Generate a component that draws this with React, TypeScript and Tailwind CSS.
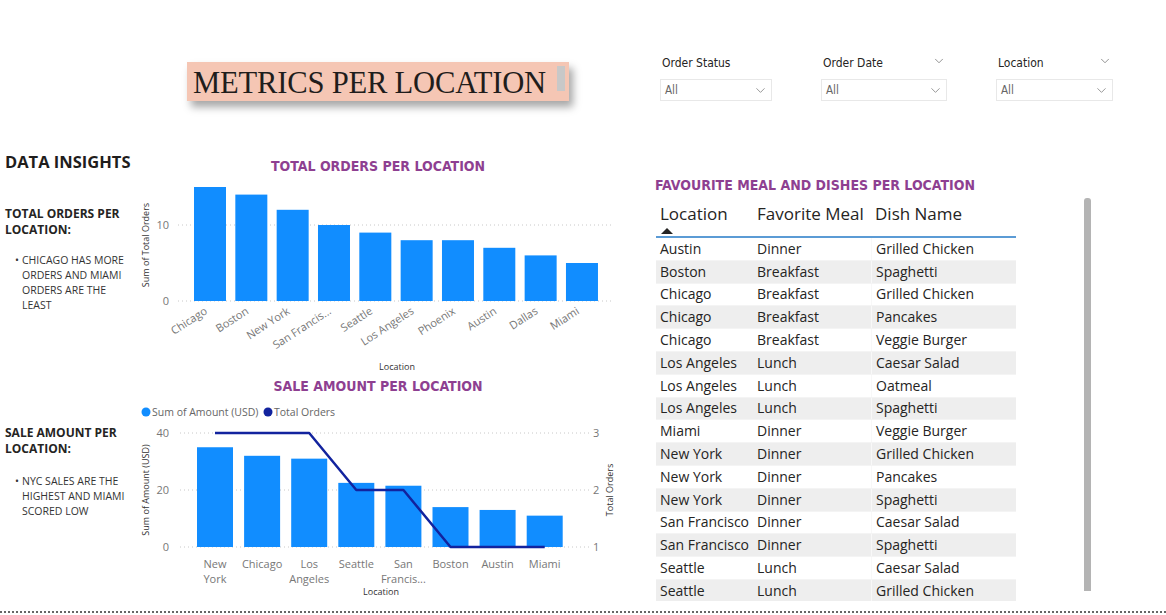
import { ChevronDown } from 'lucide-react';

const ordersData = [
  { name: 'Chicago', value: 15 },
  { name: 'Boston', value: 14 },
  { name: 'New York', value: 12 },
  { name: 'San Francis...', value: 10 },
  { name: 'Seattle', value: 9 },
  { name: 'Los Angeles', value: 8 },
  { name: 'Phoenix', value: 8 },
  { name: 'Austin', value: 7 },
  { name: 'Dallas', value: 6 },
  { name: 'Miami', value: 5 },
];

const salesData = [
  { name: ['New', 'York'], amount: 35, orders: 3 },
  { name: ['Chicago'], amount: 32, orders: 3 },
  { name: ['Los', 'Angeles'], amount: 31, orders: 3 },
  { name: ['Seattle'], amount: 22.5, orders: 2 },
  { name: ['San', 'Francis...'], amount: 21.5, orders: 2 },
  { name: ['Boston'], amount: 14, orders: 1 },
  { name: ['Austin'], amount: 13, orders: 1 },
  { name: ['Miami'], amount: 11, orders: 1 },
];

const rows = [
  ['Austin', 'Dinner', 'Grilled Chicken'],
  ['Boston', 'Breakfast', 'Spaghetti'],
  ['Chicago', 'Breakfast', 'Grilled Chicken'],
  ['Chicago', 'Breakfast', 'Pancakes'],
  ['Chicago', 'Breakfast', 'Veggie Burger'],
  ['Los Angeles', 'Lunch', 'Caesar Salad'],
  ['Los Angeles', 'Lunch', 'Oatmeal'],
  ['Los Angeles', 'Lunch', 'Spaghetti'],
  ['Miami', 'Dinner', 'Veggie Burger'],
  ['New York', 'Dinner', 'Grilled Chicken'],
  ['New York', 'Dinner', 'Pancakes'],
  ['New York', 'Dinner', 'Spaghetti'],
  ['San Francisco', 'Dinner', 'Caesar Salad'],
  ['San Francisco', 'Dinner', 'Spaghetti'],
  ['Seattle', 'Lunch', 'Caesar Salad'],
  ['Seattle', 'Lunch', 'Grilled Chicken'],
];

const uiFont = "font-['Open_Sans','Noto_Sans',sans-serif]";
const dinFont = "font-['DejaVu_Sans_Condensed','DejaVu_Sans',sans-serif]";

function Slicer({ label, headChevron, width }: { label: string; headChevron?: boolean; width: string }) {
  return (
    <div className={`flex flex-col ${width}`}>
      <div className="flex items-center justify-between h-[17px] pl-[2px] pr-[1px]">
        <span className={`${dinFont} text-[12px] text-[#252423]`}>{label}</span>
        {headChevron && <ChevronDown className="w-[14px] h-[14px] text-[#666] -mt-[4px]" strokeWidth={1.2} />}
      </div>
      <div className="mt-[8px] h-[22px] border border-[#e8e8e8] flex items-center justify-between pl-[4px] pr-[3px]">
        <span className={`${dinFont} text-[11.5px] text-[#666] mt-[1px]`}>All</span>
        <ChevronDown className="w-[15px] h-[15px] text-[#777]" strokeWidth={1.2} />
      </div>
    </div>
  );
}

function OrdersChart() {
  const base = 301;
  const unit = 7.6;
  return (
    <svg width="480" height="198" viewBox="135 178 480 198" className="block">
      <g stroke="#c8c8c8" strokeDasharray="1 3">
        <line x1="178" y1="225" x2="612" y2="225" />
        <line x1="178" y1="301" x2="612" y2="301" />
      </g>
      <g fontFamily="Open Sans, sans-serif" fontSize="11" fill="#777" textAnchor="end">
        <text x="169" y="229">10</text>
        <text x="169" y="305">0</text>
      </g>
      <text
        x="149"
        y="245"
        transform="rotate(-90 149 245)"
        textAnchor="middle"
        fontFamily="Open Sans, sans-serif"
        fontSize="9"
        fill="#333"
      >
        Sum of Total Orders
      </text>
      {ordersData.map((d, i) => {
        const x = 194 + i * 41.33;
        const h = d.value * unit;
        const cx = x + 16;
        return (
          <g key={d.name}>
            <rect x={x} y={base - h} width="32" height={h} fill="#118dff" />
            <text
              x={cx - 2}
              y={313}
              transform={`rotate(-33 ${cx - 2} 313)`}
              textAnchor="end"
              fontFamily="Open Sans, sans-serif"
              fontSize="11"
              fill="#777"
            >
              {d.name}
            </text>
          </g>
        );
      })}
      <text x="397" y="370" textAnchor="middle" fontFamily="Open Sans, sans-serif" fontSize="9" fill="#333">
        Location
      </text>
    </svg>
  );
}

function SalesChart() {
  const base = 547;
  const unit = 2.85;
  const pts = salesData
    .map((d, i) => {
      const cx = 197 + i * 47.1 + 18;
      const y = base - (d.orders - 1) * 57;
      return `${cx},${y}`;
    })
    .join(' ');
  return (
    <svg width="480" height="198" viewBox="135 400 480 198" className="block">
      <circle cx="146" cy="412" r="4.5" fill="#118dff" />
      <text x="152" y="416" fontFamily="Open Sans, sans-serif" fontSize="10.5" fill="#666">
        Sum of Amount (USD)
      </text>
      <circle cx="268" cy="412" r="4.5" fill="#12239e" />
      <text x="274" y="416" fontFamily="Open Sans, sans-serif" fontSize="10.5" fill="#666">
        Total Orders
      </text>
      <g stroke="#c8c8c8" strokeDasharray="1 3">
        <line x1="180" y1="433" x2="590" y2="433" />
        <line x1="180" y1="490" x2="590" y2="490" />
        <line x1="180" y1="547" x2="590" y2="547" />
      </g>
      <g fontFamily="Open Sans, sans-serif" fontSize="11" fill="#777">
        <text x="169" y="437" textAnchor="end">40</text>
        <text x="169" y="494" textAnchor="end">20</text>
        <text x="169" y="551" textAnchor="end">0</text>
        <text x="593" y="437">3</text>
        <text x="593" y="494">2</text>
        <text x="593" y="551">1</text>
      </g>
      <text
        x="149"
        y="490"
        transform="rotate(-90 149 490)"
        textAnchor="middle"
        fontFamily="Open Sans, sans-serif"
        fontSize="9"
        fill="#333"
      >
        Sum of Amount (USD)
      </text>
      <text
        x="613"
        y="490"
        transform="rotate(-90 613 490)"
        textAnchor="middle"
        fontFamily="Open Sans, sans-serif"
        fontSize="9"
        fill="#333"
      >
        Total Orders
      </text>
      {salesData.map((d, i) => {
        const x = 197 + i * 47.1;
        const h = d.amount * unit;
        const cx = x + 18;
        return (
          <g key={d.name.join(' ')}>
            <rect x={x} y={base - h} width="36" height={h} fill="#118dff" />
            {d.name.map((line, j) => (
              <text
                key={line}
                x={cx}
                y={568 + j * 15}
                textAnchor="middle"
                fontFamily="Open Sans, sans-serif"
                fontSize="11"
                fill="#777"
              >
                {line}
              </text>
            ))}
          </g>
        );
      })}
      <polyline points={pts} fill="none" stroke="#12239e" strokeWidth="2.5" strokeLinejoin="round" />
      <text x="381" y="595" textAnchor="middle" fontFamily="Open Sans, sans-serif" fontSize="9" fill="#333">
        Location
      </text>
    </svg>
  );
}

function Insight({ heading, text, gap }: { heading: string[]; text: string[]; gap: string }) {
  return (
    <div className={`${uiFont} pl-[5px]`}>
      {heading.map((h) => (
        <div key={h} className="text-[12px] leading-[16px] font-bold text-[#252423]">
          {h}
        </div>
      ))}
      <div className={`flex ${gap} pl-[10px] text-[10.5px] leading-[15px] text-[#333]`}>
        <span className="w-[7px]">•</span>
        <div>
          {text.map((t) => (
            <div key={t}>{t}</div>
          ))}
        </div>
      </div>
    </div>
  );
}

export default function App() {
  return (
    <div className="w-[1166px] h-[615px] bg-white overflow-hidden flex flex-col relative">
      <div className="flex h-[150px]">
        <div className="ml-[187px] mt-[62px] w-[382px] h-[39px] bg-[#f5c6b4] shadow-[4px_6px_8px_rgba(0,0,0,0.35)] flex items-center justify-between pl-[6px] pr-[4px]">
          <span className="font-['Liberation_Serif','Times_New_Roman',serif] text-[30.6px] leading-none text-[#1f1d1c] tracking-[-0.2px] mt-[3px]">
            METRICS PER LOCATION
          </span>
          <div className="w-[8px] h-[25px] bg-[#c8c8c8] -mt-[6px]" />
        </div>
        <div className="ml-[91px] mt-[54px] flex h-[48px]">
          <Slicer label="Order Status" width="w-[112px]" />
          <div className="w-[49px]" />
          <Slicer label="Order Date" headChevron width="w-[126px]" />
          <div className="w-[49px]" />
          <Slicer label="Location" headChevron width="w-[117px]" />
        </div>
      </div>

      <div className="flex flex-1">
        <div className="w-[135px] flex flex-col">
          <div className={`${uiFont} pl-[5px] text-[16.5px] font-bold text-[#1f1d1c] leading-[22px] mt-[1px]`}>
            DATA INSIGHTS
          </div>
          <div className="mt-[33px]">
            <Insight
              gap="mt-[15px]"
              heading={['TOTAL ORDERS PER', 'LOCATION:']}
              text={['CHICAGO HAS MORE', 'ORDERS AND MIAMI', 'ORDERS ARE THE', 'LEAST']}
            />
          </div>
          <div className="mt-[112px]">
            <Insight
              gap="mt-[17px]"
              heading={['SALE AMOUNT PER', 'LOCATION:']}
              text={['NYC SALES ARE THE', 'HIGHEST AND MIAMI', 'SCORED LOW']}
            />
          </div>
        </div>

        <div className="w-[480px] flex flex-col">
          <div className={`${dinFont} text-center text-[14px] font-bold text-[#8e3f91] leading-[18px] mt-[7px] pl-[6px]`}>
            TOTAL ORDERS PER LOCATION
          </div>
          <div className="mt-[3px]">
            <OrdersChart />
          </div>
          <div className={`${dinFont} text-center text-[14px] font-bold text-[#8e3f91] leading-[18px] mt-[1px] pl-[6px]`}>
            SALE AMOUNT PER LOCATION
          </div>
          <div className="mt-[5px]">
            <SalesChart />
          </div>
        </div>

        <div className="ml-[40px] flex flex-col w-[440px] relative">
          <div className={`${dinFont} text-[14px] font-bold text-[#8e3f91] leading-[18px] mt-[26px]`}>
            FAVOURITE MEAL AND DISHES PER LOCATION
          </div>
          <div className="flex">
            <div className={`${uiFont} w-[360px] h-[399px] overflow-hidden ml-[1px] mt-[8px] text-[#252423]`}>
              <div className="flex border-b-2 border-[#5b9bd5] h-[36px]">
                <div className="w-[97px] pl-[4px] flex flex-col">
                  <span className="text-[17px] leading-[24px]">Location</span>
                  <svg width="12" height="7" viewBox="0 0 12 7" className="ml-[1px] mt-[1px]">
                    <polygon points="0,7 6,1 12,7" fill="#252423" />
                  </svg>
                </div>
                <div className="w-[118px] pl-[4px] text-[17px] leading-[24px]">Favorite Meal</div>
                <div className="flex-1 pl-[4px] text-[17px] leading-[24px]">Dish Name</div>
              </div>
              {rows.map((r, i) => (
                <div
                  key={i}
                  className={`flex h-[22.8px] shrink-0 items-center text-[14px] leading-[18px] border-b border-[#f4f4f4] ${i % 2 === 1 ? 'bg-[#eeeeee]' : 'bg-white'}`}
                >
                  <div className="w-[97px] pl-[4px] whitespace-nowrap">{r[0]}</div>
                  <div className="w-[118px] pl-[4px] whitespace-nowrap">{r[1]}</div>
                  <div className="flex-1 pl-[4px] whitespace-nowrap border-l border-[#f8f8f8] self-stretch flex items-center">{r[2]}</div>
                </div>
              ))}
            </div>
            <div className="ml-[68px] mt-[4px] w-[7px] h-[393px] rounded-t-[3px] bg-[#b4b4b4]" />
          </div>
        </div>
      </div>

      <div className="absolute left-0 right-0 top-[611px] border-t-2 border-dotted border-[#666]" />
    </div>
  );
}
